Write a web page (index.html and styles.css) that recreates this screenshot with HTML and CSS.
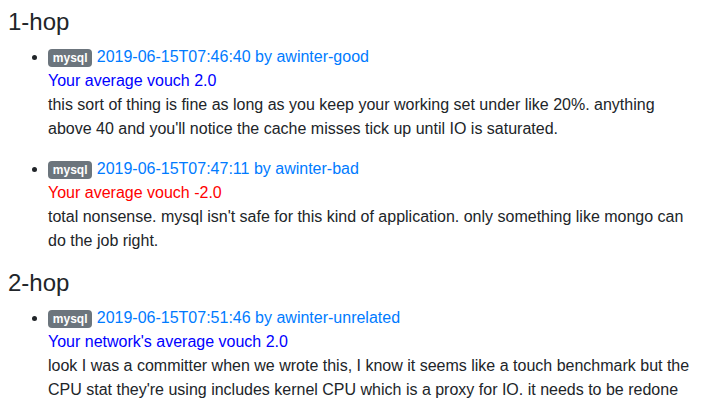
FILE: index.html
```html
<!DOCTYPE html>
<html>
<head>
<meta charset="utf-8">
<link rel="stylesheet" href="styles.css">
</head>
<body>
<h3 class="hop">1-hop</h3>
<ul class="vouches">
  <li>
    <span class="badge">mysql</span> <a class="link" href="#">2019-06-15T07:46:40 by awinter-good</a>
    <div class="avg pos">Your average vouch 2.0</div>
    <p class="text">this sort of thing is fine as long as you keep your working set under like 20%. anything above 40 and you'll notice the cache misses tick up until IO is saturated.</p>
  </li>
  <li>
    <span class="badge">mysql</span> <a class="link" href="#">2019-06-15T07:47:11 by awinter-bad</a>
    <div class="avg neg">Your average vouch -2.0</div>
    <p class="text">total nonsense. mysql isn't safe for this kind of application. only something like mongo can do the job right.</p>
  </li>
</ul>
<h3 class="hop">2-hop</h3>
<ul class="vouches">
  <li>
    <span class="badge">mysql</span> <a class="link" href="#">2019-06-15T07:51:46 by awinter-unrelated</a>
    <div class="avg pos">Your network's average vouch 2.0</div>
    <p class="text">look I was a committer when we wrote this, I know it seems like a touch benchmark but the CPU stat they're using includes kernel CPU which is a proxy for IO. it needs to be redone</p>
  </li>
</ul>
</body>
</html>
```
FILE: styles.css
```css
body {
  margin: 8px;
  font-family: "Liberation Sans", Arial, sans-serif;
  font-size: 16px;
  line-height: 1.5;
  color: #212529;
  background: #fff;
}
.hop {
  margin: 0 0 8px;
  font-size: 24px;
  font-weight: 500;
  line-height: 1.2;
}
.vouches {
  margin: 0 0 16px;
  padding-left: 40px;
}
.badge {
  display: inline-block;
  padding: 0.25em 0.4em;
  font-size: 75%;
  font-weight: 700;
  line-height: 1;
  color: #fff;
  background: #6c757d;
  border-radius: 4px;
  vertical-align: baseline;
}
.link {
  color: #007bff;
  text-decoration: none;
}
.avg.pos { color: #0000ff; }
.avg.neg { color: #ff0000; }
.text {
  margin: 0 0 16px;
}
```
